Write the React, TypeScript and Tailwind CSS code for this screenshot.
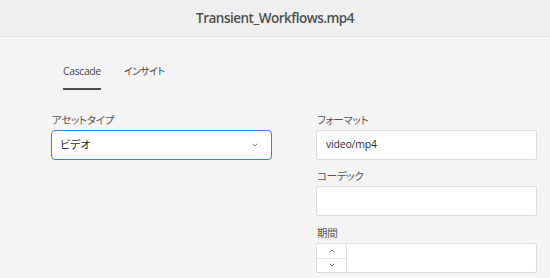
import { ChevronDown, ChevronUp } from 'lucide-react';

const jp = "font-['Open_Sans','Noto_Sans_CJK_JP',sans-serif] [font-feature-settings:'palt']";

function Label({ children }: { children: React.ReactNode }) {
  return <div className="h-[20px] pl-px text-[10.5px] leading-[20px] text-[#555] tracking-[-0.3px]">{children}</div>;
}

export default function App() {
  return (
    <div className={`w-[550px] h-[278px] overflow-hidden bg-[#f4f4f4] ${jp}`}>
      <div className="h-[37px] flex items-center justify-center bg-[#efefef] border-b border-[#e4e4e4]">
        <h1 className="text-[13.5px] font-semibold text-[#505050] tracking-[-0.5px]">Transient_Workflows.mp4</h1>
      </div>

      <div className="pl-[63px] pt-[25px] flex gap-[23px] text-[10.5px] text-[#4b4b4b] tracking-[-0.4px]">
        <div className="flex flex-col">
          <span className="leading-[18px]">Cascade</span>
          <span className="mt-[8px] h-[2px] bg-[#4b4b4b]" />
        </div>
        <span className="leading-[18px] text-[10px] tracking-[-0.6px]">インサイト</span>
      </div>

      <div className="mt-[20px] pl-[51px] flex gap-[44px]">
        <div className="w-[221px] flex flex-col">
          <Label>アセットタイプ</Label>
          <div className="h-[30px] flex items-center justify-between px-[8px] bg-white border-[1.5px] border-[#3a7fdc] rounded-[4px] text-[11px] text-[#2c2c2c]">
            <span>ビデオ</span>
            <ChevronDown size={8} strokeWidth={2.5} className="text-[#6e6e6e] mr-[4px]" />
          </div>
        </div>

        <div className="w-[221px] flex flex-col">
          <Label>フォーマット</Label>
          <div className="h-[30px] flex items-center px-[9px] bg-white border border-[#dedede] rounded-[2px] text-[10.5px] text-[#2c2c2c] tracking-[-0.2px]">
            video/mp4
          </div>
          <div className="mt-[6px]">
            <Label>コーデック</Label>
          </div>
          <div className="h-[30px] bg-white border border-[#dedede] rounded-[2px]" />
          <div className="mt-[7px]">
            <Label>期間</Label>
          </div>
          <div className="h-[30px] flex bg-white border border-[#dedede] rounded-[2px]">
            <div className="w-[30px] flex flex-col border-r border-[#dedede]">
              <div className="flex-1 flex items-center justify-center border-b border-[#e6e6e6]">
                <ChevronUp size={8} strokeWidth={2.5} className="text-[#6e6e6e]" />
              </div>
              <div className="flex-1 flex items-center justify-center">
                <ChevronDown size={8} strokeWidth={2.5} className="text-[#6e6e6e]" />
              </div>
            </div>
            <div className="flex-1" />
          </div>
        </div>
      </div>
    </div>
  );
}
